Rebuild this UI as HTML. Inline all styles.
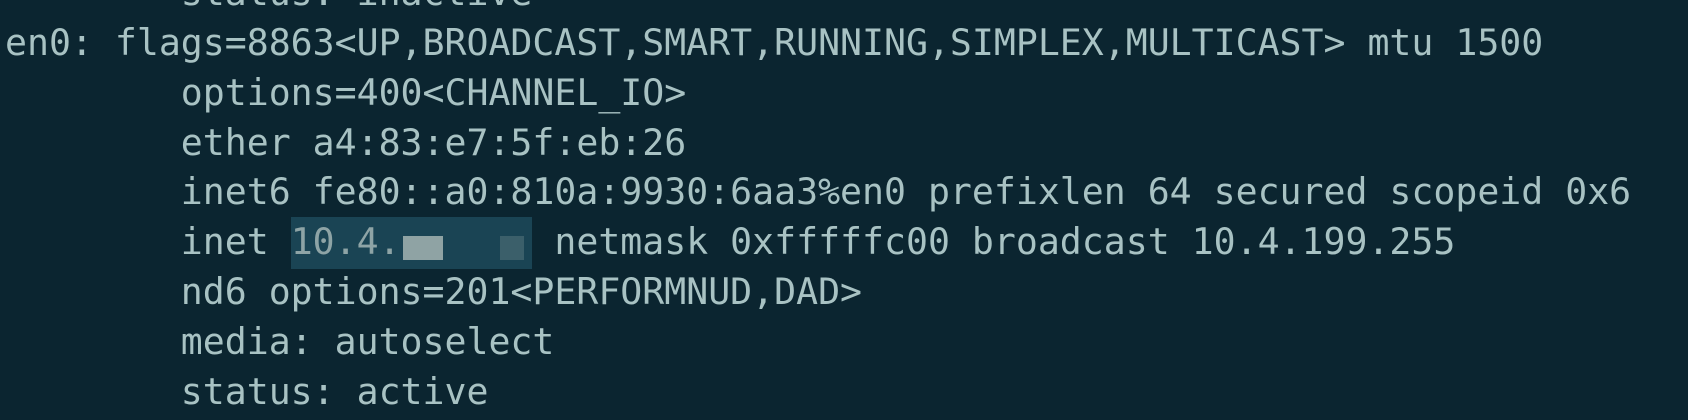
<!DOCTYPE html>
<html><head><style>
html,body{margin:0;padding:0;background:#0b2530;width:1688px;height:420px;overflow:hidden}
pre{position:absolute;left:5px;top:-32px;margin:0;font-family:"DejaVu Sans Mono","Liberation Mono",monospace;font-size:36.5px;line-height:49.85px;color:#a8c2c3}
.hl{position:absolute;left:291px;top:217px;width:241px;height:52px;background:#1a4454}
.b1{position:absolute;left:403px;top:236px;width:40px;height:24px;background:#8fa3a4}
.b2{position:absolute;left:500px;top:236px;width:24px;height:24px;background:#3b5f6a}
</style></head><body>
<div class="hl"></div>
<pre>        status: inactive
en0: flags=8863&lt;UP,BROADCAST,SMART,RUNNING,SIMPLEX,MULTICAST&gt; mtu 1500
        options=400&lt;CHANNEL_IO&gt;
        ether a4:83:e7:5f:eb:26
        inet6 fe80::a0:810a:9930:6aa3%en0 prefixlen 64 secured scopeid 0x6
        inet <span style="color:#8ea4a6">10.4.</span>       netmask 0xfffffc00 broadcast 10.4.199.255
        nd6 options=201&lt;PERFORMNUD,DAD&gt;
        media: autoselect
        status: active</pre>
<div class="b1"></div><div class="b2"></div>
</body></html>
